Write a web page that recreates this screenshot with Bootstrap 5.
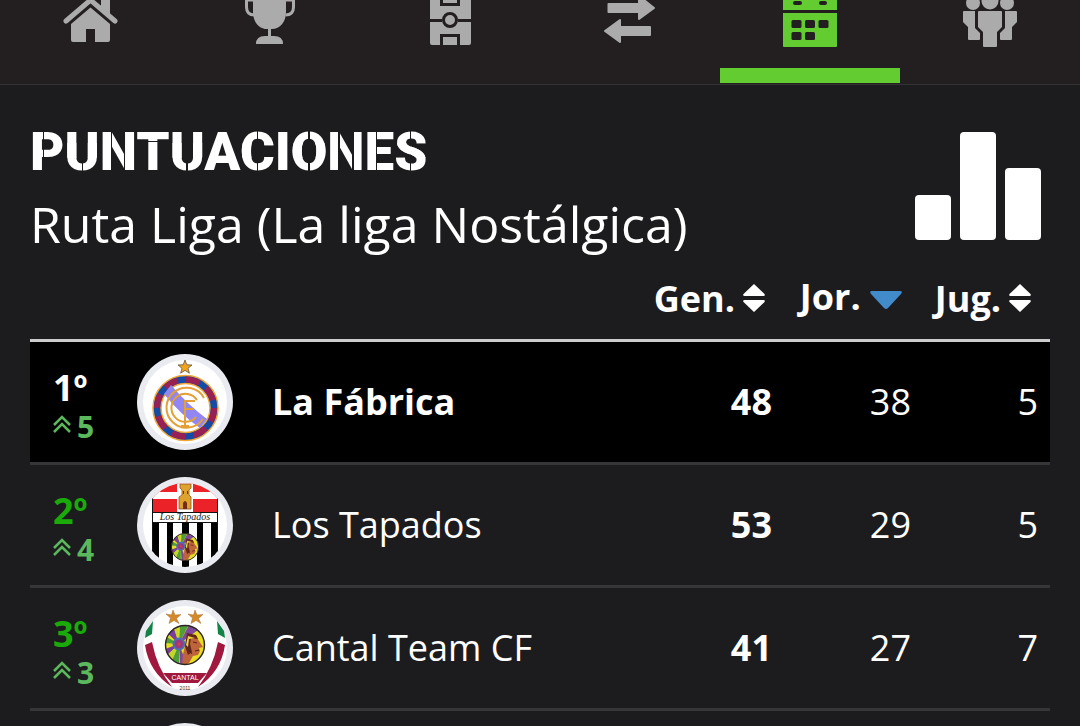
<!DOCTYPE html>
<html lang="es">
<head>
<meta charset="utf-8">
<meta name="viewport" content="width=device-width, initial-scale=1">
<title>Puntuaciones</title>
<link href="https://cdn.jsdelivr.net/npm/bootstrap@5.3.0/dist/css/bootstrap.min.css" rel="stylesheet">
<style>
body{background:#1c1c1e;color:#fff;font-family:"Open Sans",sans-serif;height:100vh;overflow:hidden}
.tabs{background:#231f20;border-bottom:1px solid #333}
.tabs a{color:#ababab;height:84px;border-bottom:1px solid transparent}
.tabs a svg{display:block;width:180px;height:68px}
.tabs a.active{color:#62cc31}
.tabs a.active::after{content:"";width:100%;height:15px;background:#62cc31}
.page{padding:37px 30px 0}
.headline{font:900 53px/60px Roboto,sans-serif;margin:0}
/* stencil cuts of the headline letters */
.headline span{color:transparent;-webkit-background-clip:text;background-clip:text}
.cut-side{background-image:linear-gradient(90deg,#fff 37%,#1c1c1e 0 41%,#fff 0)}
.cut-mid{background-image:linear-gradient(transparent 36%,#fff 0 60%,transparent 0),linear-gradient(90deg,#fff 48%,#1c1c1e 0 52%,#fff 0)}
.cut-both{background-image:linear-gradient(90deg,#fff 30%,#1c1c1e 0 34%,#fff 0 66%,#1c1c1e 0 70%,#fff 0)}
.cut-top{background-image:linear-gradient(#fff 32%,#1c1c1e 0 34%,#fff 0)}
.league{font-size:50px;line-height:72px;margin:6px 0 0}
.bars{width:126px;height:108px;margin:10px 9px 0 0}
.scores{table-layout:fixed;width:100%;font-size:36px;line-height:48px}
.scores thead th{height:80px;padding:0 19px 16px 0;white-space:nowrap;border-bottom:3px solid #ccc;text-align:right;vertical-align:bottom}
.scores thead th.sorted{padding:0 21px 18px 0}
.scores thead button{color:#fff;font-weight:700;line-height:48px}
.both{vertical-align:baseline;margin-left:8px}
.scores tbody td,.scores tbody th{height:123px;border-bottom:3px solid #363638;padding:0}
.scores tbody .rank{padding:8px 0 0 23px}
.scores tbody .num{text-align:right;padding-right:12px}
.scores .me{background:#000}
.c-pos{width:107px}.c-crest{width:135px}.c-gen{width:150px}.c-num{width:139px}.c-last{width:127px}
.place{color:#1aab0b;font-weight:700;line-height:42px}
.me .place{color:#fff}
.rise{color:#5cb85c;font-size:30px;font-weight:700;line-height:36px}
.crest{display:block;width:96px;height:96px}
</style>
</head>
<body>
<nav class="tabs d-flex" aria-label="Principal">
<a href="#" aria-label="Inicio" class="flex-fill d-flex flex-column align-items-center"><svg viewBox="0 0 180 68"><path d="M66 21 90.5 0 115 21" fill="none" stroke="currentColor" stroke-width="5" stroke-linecap="round"/><path fill="currentColor" d="M101 0h9v15l-9-7zM90.500 7.500 110 24v16q0 2-2 2H95V29h-9v13H73q-2 0-2-2V24z"/></svg></a>
<a href="#" aria-label="Copa" class="flex-fill d-flex flex-column align-items-center"><svg viewBox="0 0 180 68"><path fill="currentColor" d="M73 0h33v12c0 10-6 17-14 17h-1v7h3q9 0 9 8H76q0-8 9-8h3v-7h-1c-8 0-14-7-14-17z"/><path d="M74 0H66.500v7q0 8 8 8M104 0h9.500v7q0 8-8 8" fill="none" stroke="currentColor" stroke-width="3"/></svg></a>
<a href="#" aria-label="Alineación" class="flex-fill d-flex flex-column align-items-center"><svg viewBox="0 0 180 68"><path fill="currentColor" d="M70 0h41v43q0 2-2 2H72q-2 0-2-2z"/><g fill="none" stroke="#231f20" stroke-width="3"><path d="M70 20.500h12M98 20.500h13M81.500 0v4.500h17V0M81.500 45v-9.500h17V45"/><circle cx="90" cy="20" r="6.500"/></g></svg></a>
<a href="#" aria-label="Mercado" class="flex-fill d-flex flex-column align-items-center"><svg viewBox="0 0 180 68"><path fill="currentColor" stroke="currentColor" stroke-width="2" stroke-linejoin="round" d="M68.500 4H99v-8l15 12-15 11v-7H68.500zM110 27H80v-7L65 31l15 11v-7h30z"/></svg></a>
<a href="#" aria-label="Jornada" aria-current="page" class="active flex-fill d-flex flex-column align-items-center"><svg viewBox="0 0 180 68"><path fill="currentColor" d="M63 0h54v10H63zM63 13h54v33q0 1-1 1H64q-1 0-1-1z"/><g fill="#231f20"><rect x="73" y="1" width="9" height="4" rx="2"/><rect x="99" y="1" width="8" height="4" rx="2"/><rect x="71.500" y="20" width="10" height="8" rx="1.500"/><rect x="85" y="20" width="10" height="8" rx="1.500"/><rect x="98.500" y="20" width="10" height="8" rx="1.500"/><rect x="71.500" y="32" width="10" height="8" rx="1.500"/><rect x="85" y="32" width="10" height="8" rx="1.500"/></g></svg></a>
<a href="#" aria-label="Comunidad" class="flex-fill d-flex flex-column align-items-center"><svg viewBox="0 0 180 68"><g fill="currentColor"><circle cx="73" cy="3" r="7"/><circle cx="90" cy="1" r="8.500"/><circle cx="107" cy="3" r="7"/><path d="M79 11h22q1 0 1 1v15l-5 5v14q0 1-1 1H84q-1 0-1-1V32l-5-5V12q0-1 1-1zM64 11h11v17l5 5v6q0 1-1 1H69q-1 0-1-1V27l-5-5V12q0-1 1-1zM116 11h-11v17l-5 5v6q0 1 1 1h10q1 0 1-1V27l5-5V12q0-1-1-1z"/></g></svg></a>
</nav>
<main class="page">
<header class="d-flex justify-content-between align-items-start">
<div><h1 class="headline"><span class="cut-side">P</span><span class="cut-mid">U</span><span class="cut-both">N</span><span class="cut-top">T</span><span class="cut-mid">U</span>A<span class="cut-mid">C</span>I<span class="cut-mid">O</span><span class="cut-both">N</span><span class="cut-side">E</span><span class="cut-mid">S</span></h1><p class="league">Ruta Liga (La liga Nostálgica)</p></div>
<svg class="bars flex-shrink-0" viewBox="0 0 126 108" fill="#fff" aria-hidden="true"><rect y="63" width="36" height="45" rx="4"/><rect x="45" width="36" height="108" rx="4"/><rect x="90" y="36" width="36" height="72" rx="4"/></svg>
</header>
<table class="scores">
<colgroup><col class="c-pos"><col class="c-crest"><col><col class="c-gen"><col class="c-num"><col class="c-last"></colgroup>
<thead><tr><th colspan="3"></th>
<th scope="col"><button type="button" class="bg-transparent border-0 p-0">Gen.<svg class="both" width="22" height="28" viewBox="0 0 22 28" fill="currentColor" aria-hidden="true"><path d="M11 0 21.500 10q1 2-1 2h-19q-2 0-1-2zM11 28 21.500 18q1-2-1-2h-19q-2 0-1 2z"/></svg></button></th>
<th scope="col" class="sorted" aria-sort="descending"><button type="button" class="bg-transparent border-0 p-0">Jor. <svg width="32" height="18" viewBox="0 0 32 18" fill="#428bca" aria-hidden="true"><path d="M2 0h28q3 0 1 3L18 17q-2 2-4 0L1 3q-2-3 1-3z"/></svg></button></th>
<th scope="col"><button type="button" class="bg-transparent border-0 p-0">Jug.<svg class="both" width="22" height="28" viewBox="0 0 22 28" fill="currentColor" aria-hidden="true"><path d="M11 0 21.500 10q1 2-1 2h-19q-2 0-1-2zM11 28 21.500 18q1-2-1-2h-19q-2 0-1 2z"/></svg></button></th></tr></thead>
<tbody>
<tr class="me"><td class="rank"><div class="place">1º</div><div class="rise d-flex"><svg width="24" height="30" viewBox="0 0 24 30" fill="none" stroke="currentColor" stroke-width="2.500" aria-hidden="true"><path d="m1 16 8-8 8 8M1 23l8-8 8 8"/></svg>5</div></td>
<td><svg class="crest" viewBox="0 0 96 96" role="img" aria-label="Escudo"><circle cx="48" cy="48" r="48" fill="#e9ebf0"/><circle cx="48" cy="48" r="42" fill="#fff"/><path d="m48 6 1.800 4.800 5.200.2-4 3.300 1.400 4.900-4.400-2.800-4.400 2.800 1.400-4.900-4-3.300 5.200-.2z" fill="#f0a51c" stroke="#615546" stroke-width=".8"/><circle cx="48.500" cy="54" r="28.500" fill="#fff" stroke="#f0a733" stroke-width="9.500"/><circle cx="48.500" cy="54" r="28.500" fill="none" stroke="#164ba5" stroke-width="6.500"/><circle cx="48.500" cy="54" r="28.500" fill="none" stroke="#982055" stroke-width="6" stroke-dasharray="14 8.400"/><path d="m34 31-7 9q17 21 36 34l7-9Q51 51 34 31z" fill="#9186f2"/><g fill="none" stroke="#e4a037" stroke-width="2"><path d="M67 44a20 20 0 1 0-1 21M60 46a14 14 0 1 0-1 17"/><path d="M48 72V47h10M48 55h9M44 72h8"/></g></svg></td>
<th scope="row">La Fábrica</th><td class="num fw-bold">48</td><td class="num">38</td><td class="num">5</td></tr>
<tr><td class="rank"><div class="place">2º</div><div class="rise d-flex"><svg width="24" height="30" viewBox="0 0 24 30" fill="none" stroke="currentColor" stroke-width="2.500" aria-hidden="true"><path d="m1 16 8-8 8 8M1 23l8-8 8 8"/></svg>4</div></td>
<td><svg class="crest" viewBox="0 0 96 96" role="img" aria-label="Escudo"><defs><clipPath id="disc"><circle cx="48" cy="48" r="42"/></clipPath><clipPath id="round"><circle r="19.500"/></clipPath>
<g id="chief"><g clip-path="url(#round)"><circle r="20" fill="#e6dc22"/><path d="M-6-1-20-14-12-20zM-6-1-20 4v8z" fill="#7b3d9b"/><path d="M-6-1-5-20 3-19zM-6-1-20-9v7zM-6-1-14 18-6 20z" fill="#4f9e3a"/><path d="M-6-1-12-20h5zM-6-1-20 13l5 6z" fill="#c2d62c"/><path d="M-6-1 4-20l9 5zM-6-1-5 20 2 20z" fill="#80489a"/><circle cx="-6" cy="-1" r="6.500" fill="#4972b4"/><circle cx="-6" cy="-1" r="4.500" fill="#973b80"/><circle cx="-6" cy="-1" r="1.500" fill="#d54040"/><path d="M3-11 11-9l3 5 4 6-4 1 1 3-2 4-5 1-4 7-7 3 1-12z" fill="#bd643a"/><path d="m2-12 9 2 2 4-7-1-1 6 2 8-4 3-3-9z" fill="#63251c"/><path d="m3-9 7 2-6 1-1 8-2-2z" fill="#f0d23c"/><path d="m8-3 4 1M10 6l4-1M4 5l3 4" stroke="#5a1c18"/></g><circle r="19.500" fill="none" stroke="#2b2422" stroke-width="1.400"/></g></defs><circle cx="48" cy="48" r="48" fill="#e9ebf0"/><circle cx="48" cy="48" r="42" fill="#fff"/><g clip-path="url(#disc)"><path d="M15 5h66v30H15z" fill="#eb2227"/><path d="M15 15h66v7H15zM40 5h16v30H40z" fill="#fff"/><path d="M43 7h11v4l-2 2v5l2 2v12H42V20l3-2v-5l-2-2z" fill="#dda32e" stroke="#944d22" stroke-width=".8"/><path d="M46 32v-6q2-4 4 0v6zM46 14h1v3h-1zM50 14h1v3h-1z" fill="#762b19"/><path d="M15 45h7v47h-7zM30 45h6v47h-6zM45 45h7v47h-7zM60 45h6v47h-6zM74 45h7v47h-7z"/><path d="M15.500 5v87M80.500 5v87M15 35.500h66M15 45.500h66" stroke="#111" fill="none"/></g><text x="48" y="43" text-anchor="middle" font-family="Liberation Serif, serif" font-size="10" font-style="italic" fill="#222">Los Tapados</text><use href="#chief" transform="translate(48 70) scale(.7)"/></svg></td>
<td>Los Tapados</td><td class="num fw-bold">53</td><td class="num">29</td><td class="num">5</td></tr>
<tr><td class="rank"><div class="place">3º</div><div class="rise d-flex"><svg width="24" height="30" viewBox="0 0 24 30" fill="none" stroke="currentColor" stroke-width="2.500" aria-hidden="true"><path d="m1 16 8-8 8 8M1 23l8-8 8 8"/></svg>3</div></td>
<td><svg class="crest" viewBox="0 0 96 96" role="img" aria-label="Escudo"><circle cx="48" cy="48" r="48" fill="#e9ebf0"/><circle cx="48" cy="48" r="42" fill="#fff"/><path d="m16 21-7 10-1 7 7-4zM80 21l7 10 1 7-7-4z" fill="#128347"/><path d="m8 45 7-3q5 26 20 45-23-15-27-42zM88 45l-7-3q-5 26-20 45 23-15 27-42z" fill="#a0183e"/><path d="M26 73h44l-9 10H35z" fill="#a0183e"/><g fill="#d48a2c" stroke="#a67131" stroke-width=".5"><path id="star" d="m36 10 2 5 6-.500-4.500 4 2.500 5-5-3-5 3 1.500-5.500L29 14l5.500 1z"/><use href="#star" x="22"/></g><use href="#chief" transform="translate(48 45)"/><text x="48" y="80" text-anchor="middle" font-family="Liberation Sans, sans-serif" font-size="7" fill="#fff">CANTAL</text><text x="48" y="90" text-anchor="middle" font-family="Liberation Sans, sans-serif" font-size="5" fill="#333">2011</text></svg></td>
<td>Cantal Team CF</td><td class="num fw-bold">41</td><td class="num">27</td><td class="num">7</td></tr>
<tr><td></td><td><svg class="crest" viewBox="0 0 96 96" aria-hidden="true"><circle cx="48" cy="48" r="48" fill="#e9ebf0"/><circle cx="48" cy="48" r="42" fill="#fff"/></svg></td><td></td><td></td><td></td><td></td></tr>
</tbody>
</table>
</main>
<script src="https://cdn.jsdelivr.net/npm/bootstrap@5.3.0/dist/js/bootstrap.bundle.min.js"></script>
</body>
</html>
